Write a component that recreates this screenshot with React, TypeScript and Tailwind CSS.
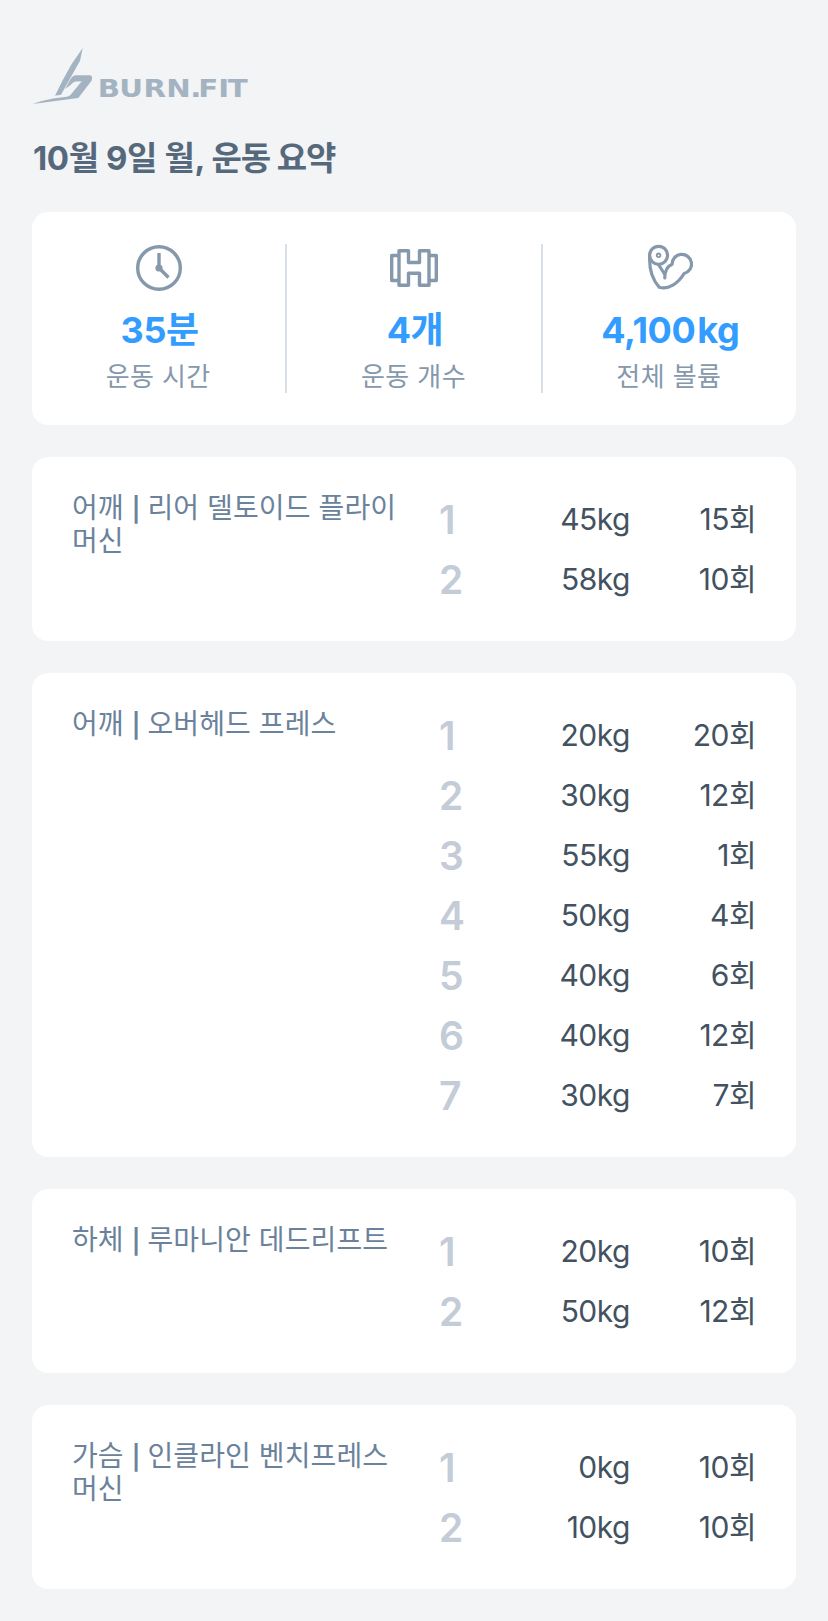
import type { ReactNode } from "react";

type WorkoutSet = { weight: number; reps: number };
type Exercise = { part: string; name: string; sets: WorkoutSet[] };

const exercises: Exercise[] = [
  {
    part: "어깨",
    name: "리어 델토이드 플라이 머신",
    sets: [
      { weight: 45, reps: 15 },
      { weight: 58, reps: 10 },
    ],
  },
  {
    part: "어깨",
    name: "오버헤드 프레스",
    sets: [
      { weight: 20, reps: 20 },
      { weight: 30, reps: 12 },
      { weight: 55, reps: 1 },
      { weight: 50, reps: 4 },
      { weight: 40, reps: 6 },
      { weight: 40, reps: 12 },
      { weight: 30, reps: 7 },
    ],
  },
  {
    part: "하체",
    name: "루마니안 데드리프트",
    sets: [
      { weight: 20, reps: 10 },
      { weight: 50, reps: 12 },
    ],
  },
  {
    part: "가슴",
    name: "인클라인 벤치프레스 머신",
    sets: [
      { weight: 0, reps: 10 },
      { weight: 10, reps: 10 },
    ],
  },
];

function Logo() {
  return (
    <svg width="220" height="60" viewBox="0 0 220 60" fill="#a4b3c1">
      <path d="M50.7 0 L39.7 16 L31.3 31 L23 47.7 L29 46.7 L48 12.7 Z" />
      <path d="M33 41 L38 32 Q40.5 27.5 44 27.3 L58 27.3 Q61 28 59.7 32.5 L46.3 50 L0.5 55.9 Q10 52.5 21.3 50.5 L34.7 48.7 Q37.5 48.3 38.7 46.7 L49.7 33.3 L43.5 33.5 Q40.5 34 38.5 37 Z" />
      <text
        x="53.9 71.5 91.4 110 129.8 136.2 152.7 160.4"
        y="48.6"
        transform="scale(1.22 1)"
        className="font-['DejaVu_Sans'] text-[24px] font-bold"
      >
        BURN.FIT
      </text>
    </svg>
  );
}

function ClockIcon() {
  return (
    <svg className="size-12 shrink-0" viewBox="0 0 48 48" fill="none" stroke="#8598ac" strokeWidth="3.4">
      <circle cx="24" cy="24" r="21.3" />
      <path d="M24 9v15l9.5 9.5" />
      <circle cx="24" cy="24" r="3.6" fill="#8598ac" stroke="none" />
    </svg>
  );
}

function DumbbellIcon() {
  return (
    <svg className="size-12 shrink-0" viewBox="0 0 48 48" fill="none" stroke="#8598ac" strokeWidth="3.4" strokeLinejoin="round">
      <path d="M9 6.7h9.5v11.8h11v-11.8h9.5v34.6h-9.5v-12h-11v12H9z" />
      <path d="M9 11.5H1.7v25H9M39 11.5h7.3v25H39" />
    </svg>
  );
}

function MuscleIcon() {
  return (
    <svg className="size-12 shrink-0" viewBox="-1.3 0 48 48" fill="none" stroke="#8598ac" strokeWidth="3.2" strokeLinecap="round" strokeLinejoin="round">
      <circle cx="12.3" cy="11.3" r="9" />
      <circle cx="12.3" cy="11.3" r="1.8" strokeWidth="1.8" />
      <path d="M3.3 12C2.8 26 7 37 13 43.3C22 45.8 32 39.5 37.8 29.5A9.7 9.7 0 1 0 25.8 20.3C21.5 22 18.5 26 18.5 34" />
      <path d="M12.5 21L18.2 30" />
    </svg>
  );
}

function Stat({ icon, value, unit, label }: { icon: ReactNode; value: string; unit: ReactNode; label: string }) {
  return (
    <div className="flex flex-1 flex-col items-center">
      {icon}
      <p className="mt-3.5 pl-0.5 text-[36px] leading-[48px] font-bold tracking-[-0.4px] text-[#339dff]">
        {value}
        {unit}
      </p>
      <p className="mt-[7px] pr-px text-[26px] leading-8 tracking-[0.4px] text-[#8598ac]">{label}</p>
    </div>
  );
}

function ExerciseCard({ exercise }: { exercise: Exercise }) {
  return (
    <section className="flex rounded-2xl bg-white px-10 py-8">
      <h2 className="w-[326px] pt-[3px] text-[28px] leading-[32.5px] tracking-[0.1px] break-keep text-[#6a829b]">
        {exercise.part} <span className="-mr-px text-[24px] leading-none font-semibold">|</span> {exercise.name}
      </h2>
      <ol className="flex-1 pl-[41px]">
        {exercise.sets.map((set, i) => (
          <li key={i} className="flex h-[60px] items-center pt-px text-[30px] tracking-[-0.5px] text-[#435261]">
            <span className="w-12 pt-px text-[39px] font-semibold text-[#c3ccd7]">{i + 1}</span>
            <span className="flex-1 text-right">{set.weight}kg</span>
            <span className="w-[126px] text-right">{set.reps}회</span>
          </li>
        ))}
      </ol>
    </section>
  );
}

export default function App() {
  return (
    <main className="min-h-[1621px] bg-[#f2f4f6] px-8 pt-12 pb-8 font-['Inter','Noto_Sans_CJK_KR',sans-serif]">
      <Logo />
      <h1 className="mt-7 pl-px text-[33px] leading-[44px] font-bold tracking-[-0.4px] text-[#56687b]">
        10월 9일 월, <span className="tracking-[-1.1px]">운동 요약</span>
      </h1>

      <section className="mt-8 flex h-[213px] rounded-2xl bg-white py-8">
        <Stat icon={<ClockIcon />} value="35" unit="분" label="운동 시간" />
        <div className="w-0.5 bg-[#d9dfe7]" />
        <Stat icon={<DumbbellIcon />} value="4" unit="개" label="운동 개수" />
        <div className="w-0.5 bg-[#d9dfe7]" />
        <Stat icon={<MuscleIcon />} value="4,100" unit={<span className="ml-0.5">kg</span>} label="전체 볼륨" />
      </section>

      <div className="mt-8 flex flex-col gap-8">
        {exercises.map((exercise) => (
          <ExerciseCard key={exercise.name} exercise={exercise} />
        ))}
      </div>
    </main>
  );
}
